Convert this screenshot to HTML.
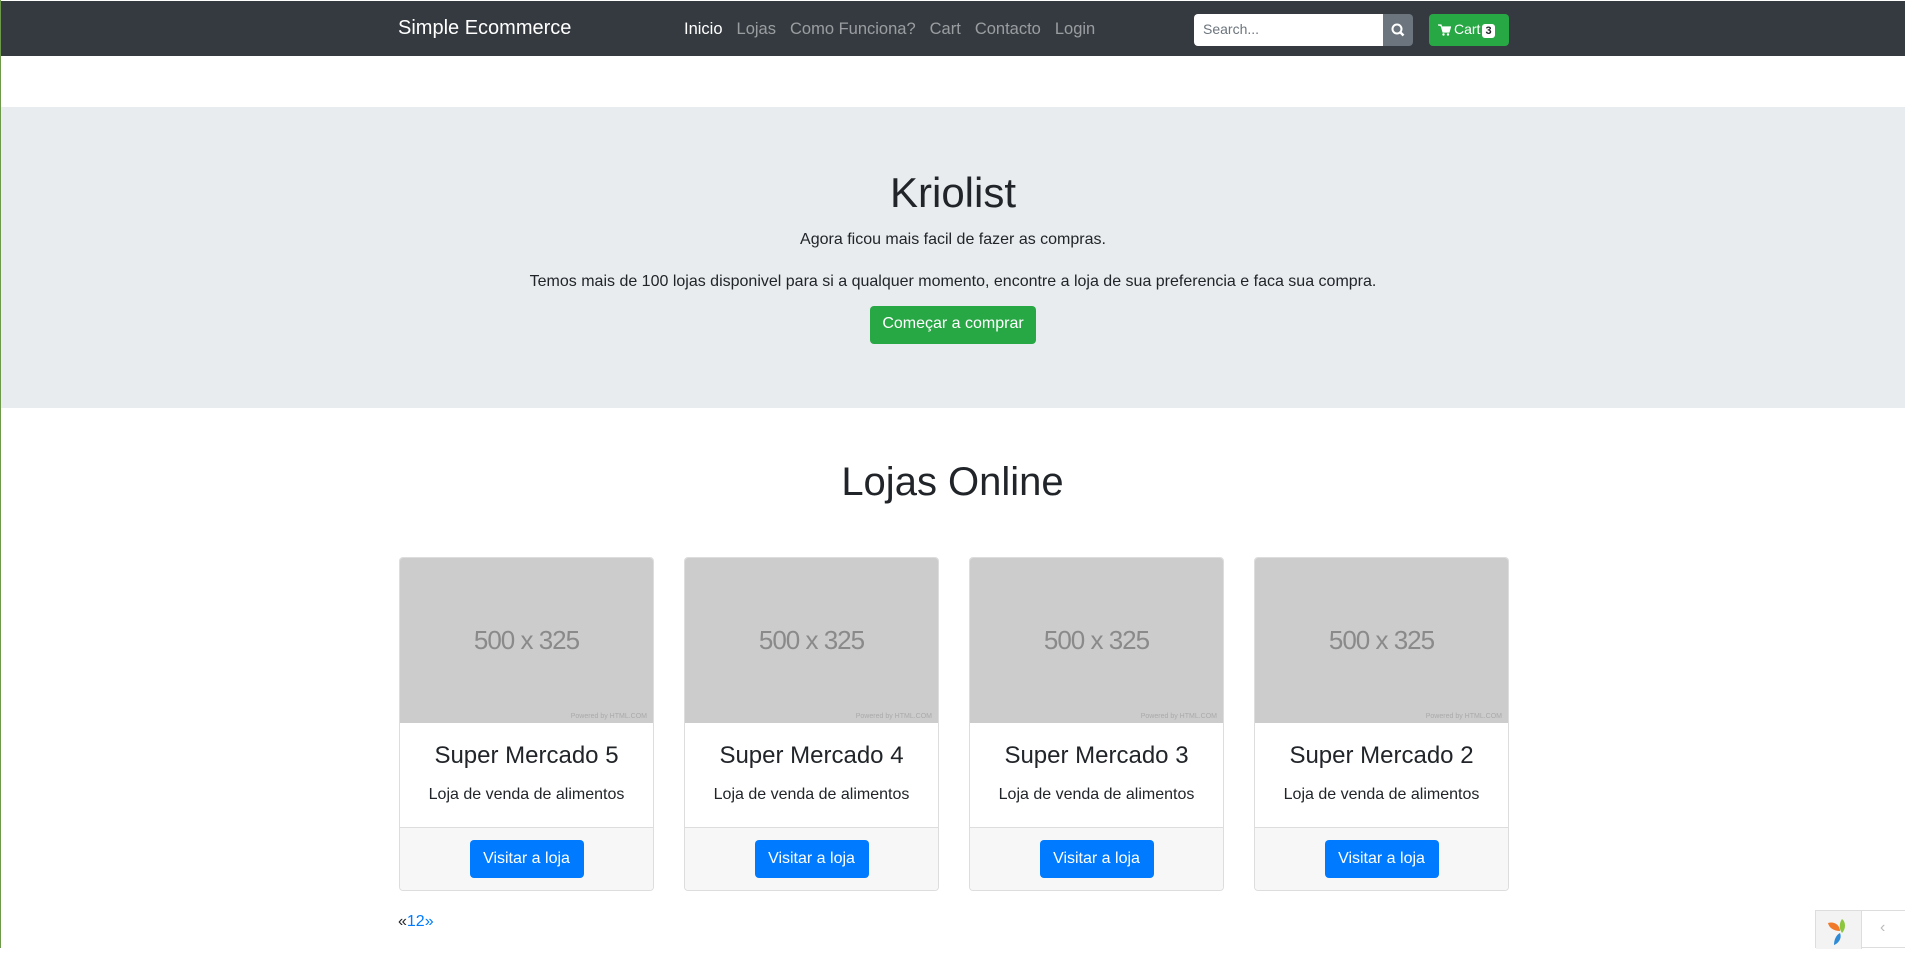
<!DOCTYPE html>
<html><head><meta charset="utf-8"><style>
*{box-sizing:border-box;margin:0;padding:0}
body{width:1905px;height:948px;overflow:hidden;font-family:"Liberation Sans",sans-serif;color:#212529;background:#fff;position:relative}
.lb{position:absolute;left:0;top:0;width:1px;height:948px;background:#6c9a4a;z-index:5}
.nav{position:absolute;top:1px;left:0;right:0;height:55px;background:#343a40}
.brand{position:absolute;left:398px;top:16px;color:#fff;font-size:20px}
.links{position:absolute;left:684px;top:19px;font-size:16.5px;color:rgba(255,255,255,.5);white-space:nowrap}
.links span{margin-right:14px}
.links span:first-child{color:#fff}
.search{position:absolute;left:1194px;top:13px;width:189px;height:32px;background:#fff;border-radius:4px 0 0 4px;color:#6c757d;font-size:14px;padding:7px 9px}
.sbtn{position:absolute;left:1383px;top:13px;width:30px;height:32px;background:#6c757d;border-radius:0 4px 4px 0}
.cart{position:absolute;left:1429px;top:13px;width:80px;height:32px;background:#28a745;border-radius:4px;color:#fff;font-size:14px;padding:7px 0 0 25px}
.badge{display:inline-block;background:#fff;color:#212529;font-size:11px;font-weight:bold;border-radius:3px;padding:1px 3px;margin-left:2px}
.hero{position:absolute;top:107px;left:1px;right:0;height:301px;background:#e9ecef;text-align:center}
.hero h1{font-weight:normal;font-size:42px;margin-top:62px}
.hero p{font-size:16px;margin-top:14px}
.btn{display:inline-block;border-radius:4px;color:#fff;font-size:16px}
.green{background:#28a745;width:166px;height:38px;padding-top:9px;margin-top:15px}
h2{position:absolute;top:460px;width:100%;text-align:center;font-weight:normal;font-size:40px}
.card{position:absolute;top:557px;width:255px;height:334px;border:1px solid #ddd;border-radius:4px;overflow:hidden;text-align:center}
.img{height:165px;background:#ccc;position:relative;color:#8a8a8a;font-size:26px;padding-top:67px;letter-spacing:-1px}
.img i{position:absolute;right:6px;bottom:3px;font-size:7px;font-style:normal;letter-spacing:0;color:#aaa}
.title{font-size:24px;margin-top:19px}
.desc{font-size:16px;margin-top:16px}
.foot{position:absolute;bottom:0;left:0;right:0;height:63px;background:#f7f7f7;border-top:1px solid #ddd}
.blue{background:#007bff;width:114px;height:38px;padding-top:10px;margin-top:12px}
.pag{position:absolute;left:398px;top:913px;font-size:16px}
.pag a{color:#007bff}
.yii{position:absolute;right:0;bottom:0;width:90px;height:38px;background:#fff;border:1px solid #ddd;border-right:none}
.yii div{position:absolute;left:0;top:0;width:46px;height:38px;background:#f3f3f3;border-right:1px solid #ddd}
</style></head><body>
<div class="lb"></div>
<div class="nav">
<div class="brand">Simple Ecommerce</div>
<div class="links"><span>Inicio</span><span>Lojas</span><span>Como Funciona?</span><span>Cart</span><span>Contacto</span><span>Login</span></div>
<div class="search">Search...</div>
<div class="sbtn"><svg width="30" height="32" viewBox="0 0 30 32"><circle cx="14" cy="15" r="4.5" fill="none" stroke="#fff" stroke-width="2"/><path d="M17 18l3.5 3.5" stroke="#fff" stroke-width="2.5"/></svg></div>
<div class="cart"><svg width="13" height="12" viewBox="0 0 13 12" style="position:absolute;left:9px;top:10px"><path d="M0 1h3l2 7h6l1.5-5H4" fill="#fff" stroke="#fff" stroke-width="1.2"/><circle cx="5.5" cy="10.5" r="1.2" fill="#fff"/><circle cx="10" cy="10.5" r="1.2" fill="#fff"/></svg>Cart<span class="badge">3</span></div>
</div>
<div class="hero">
<h1>Kriolist</h1>
<p>Agora ficou mais facil de fazer as compras.</p>
<p style="margin-top:24px">Temos mais de 100 lojas disponivel para si a qualquer momento, encontre a loja de sua preferencia e faca sua compra.</p>
<span class="btn green">Começar a comprar</span>
</div>
<h2>Lojas Online</h2>
<div class="card" style="left:399px"><div class="img">500 x 325<i>Powered by HTML.COM</i></div><div class="title">Super Mercado 5</div><div class="desc">Loja de venda de alimentos</div><div class="foot"><span class="btn blue">Visitar a loja</span></div></div>
<div class="card" style="left:684px"><div class="img">500 x 325<i>Powered by HTML.COM</i></div><div class="title">Super Mercado 4</div><div class="desc">Loja de venda de alimentos</div><div class="foot"><span class="btn blue">Visitar a loja</span></div></div>
<div class="card" style="left:969px"><div class="img">500 x 325<i>Powered by HTML.COM</i></div><div class="title">Super Mercado 3</div><div class="desc">Loja de venda de alimentos</div><div class="foot"><span class="btn blue">Visitar a loja</span></div></div>
<div class="card" style="left:1254px"><div class="img">500 x 325<i>Powered by HTML.COM</i></div><div class="title">Super Mercado 2</div><div class="desc">Loja de venda de alimentos</div><div class="foot"><span class="btn blue">Visitar a loja</span></div></div>
<div class="pag">«<a>12»</a></div>
<div class="yii"><div><svg width="46" height="38" viewBox="0 0 46 38"><path d="M12 12c6-2 12 2 12 8-6 0-11-3-12-8z" fill="#f07a2a"/><path d="M26 8c4 3 4 10 0 14-3-4-3-10 0-14z" fill="#8cc63f"/><path d="M24 22c2 5-1 10-6 12 0-5 2-10 6-12z" fill="#2d8ad6"/></svg></div><span style="position:absolute;left:64px;top:8px;color:#bbb;font-size:16px">‹</span></div>
</body></html>
